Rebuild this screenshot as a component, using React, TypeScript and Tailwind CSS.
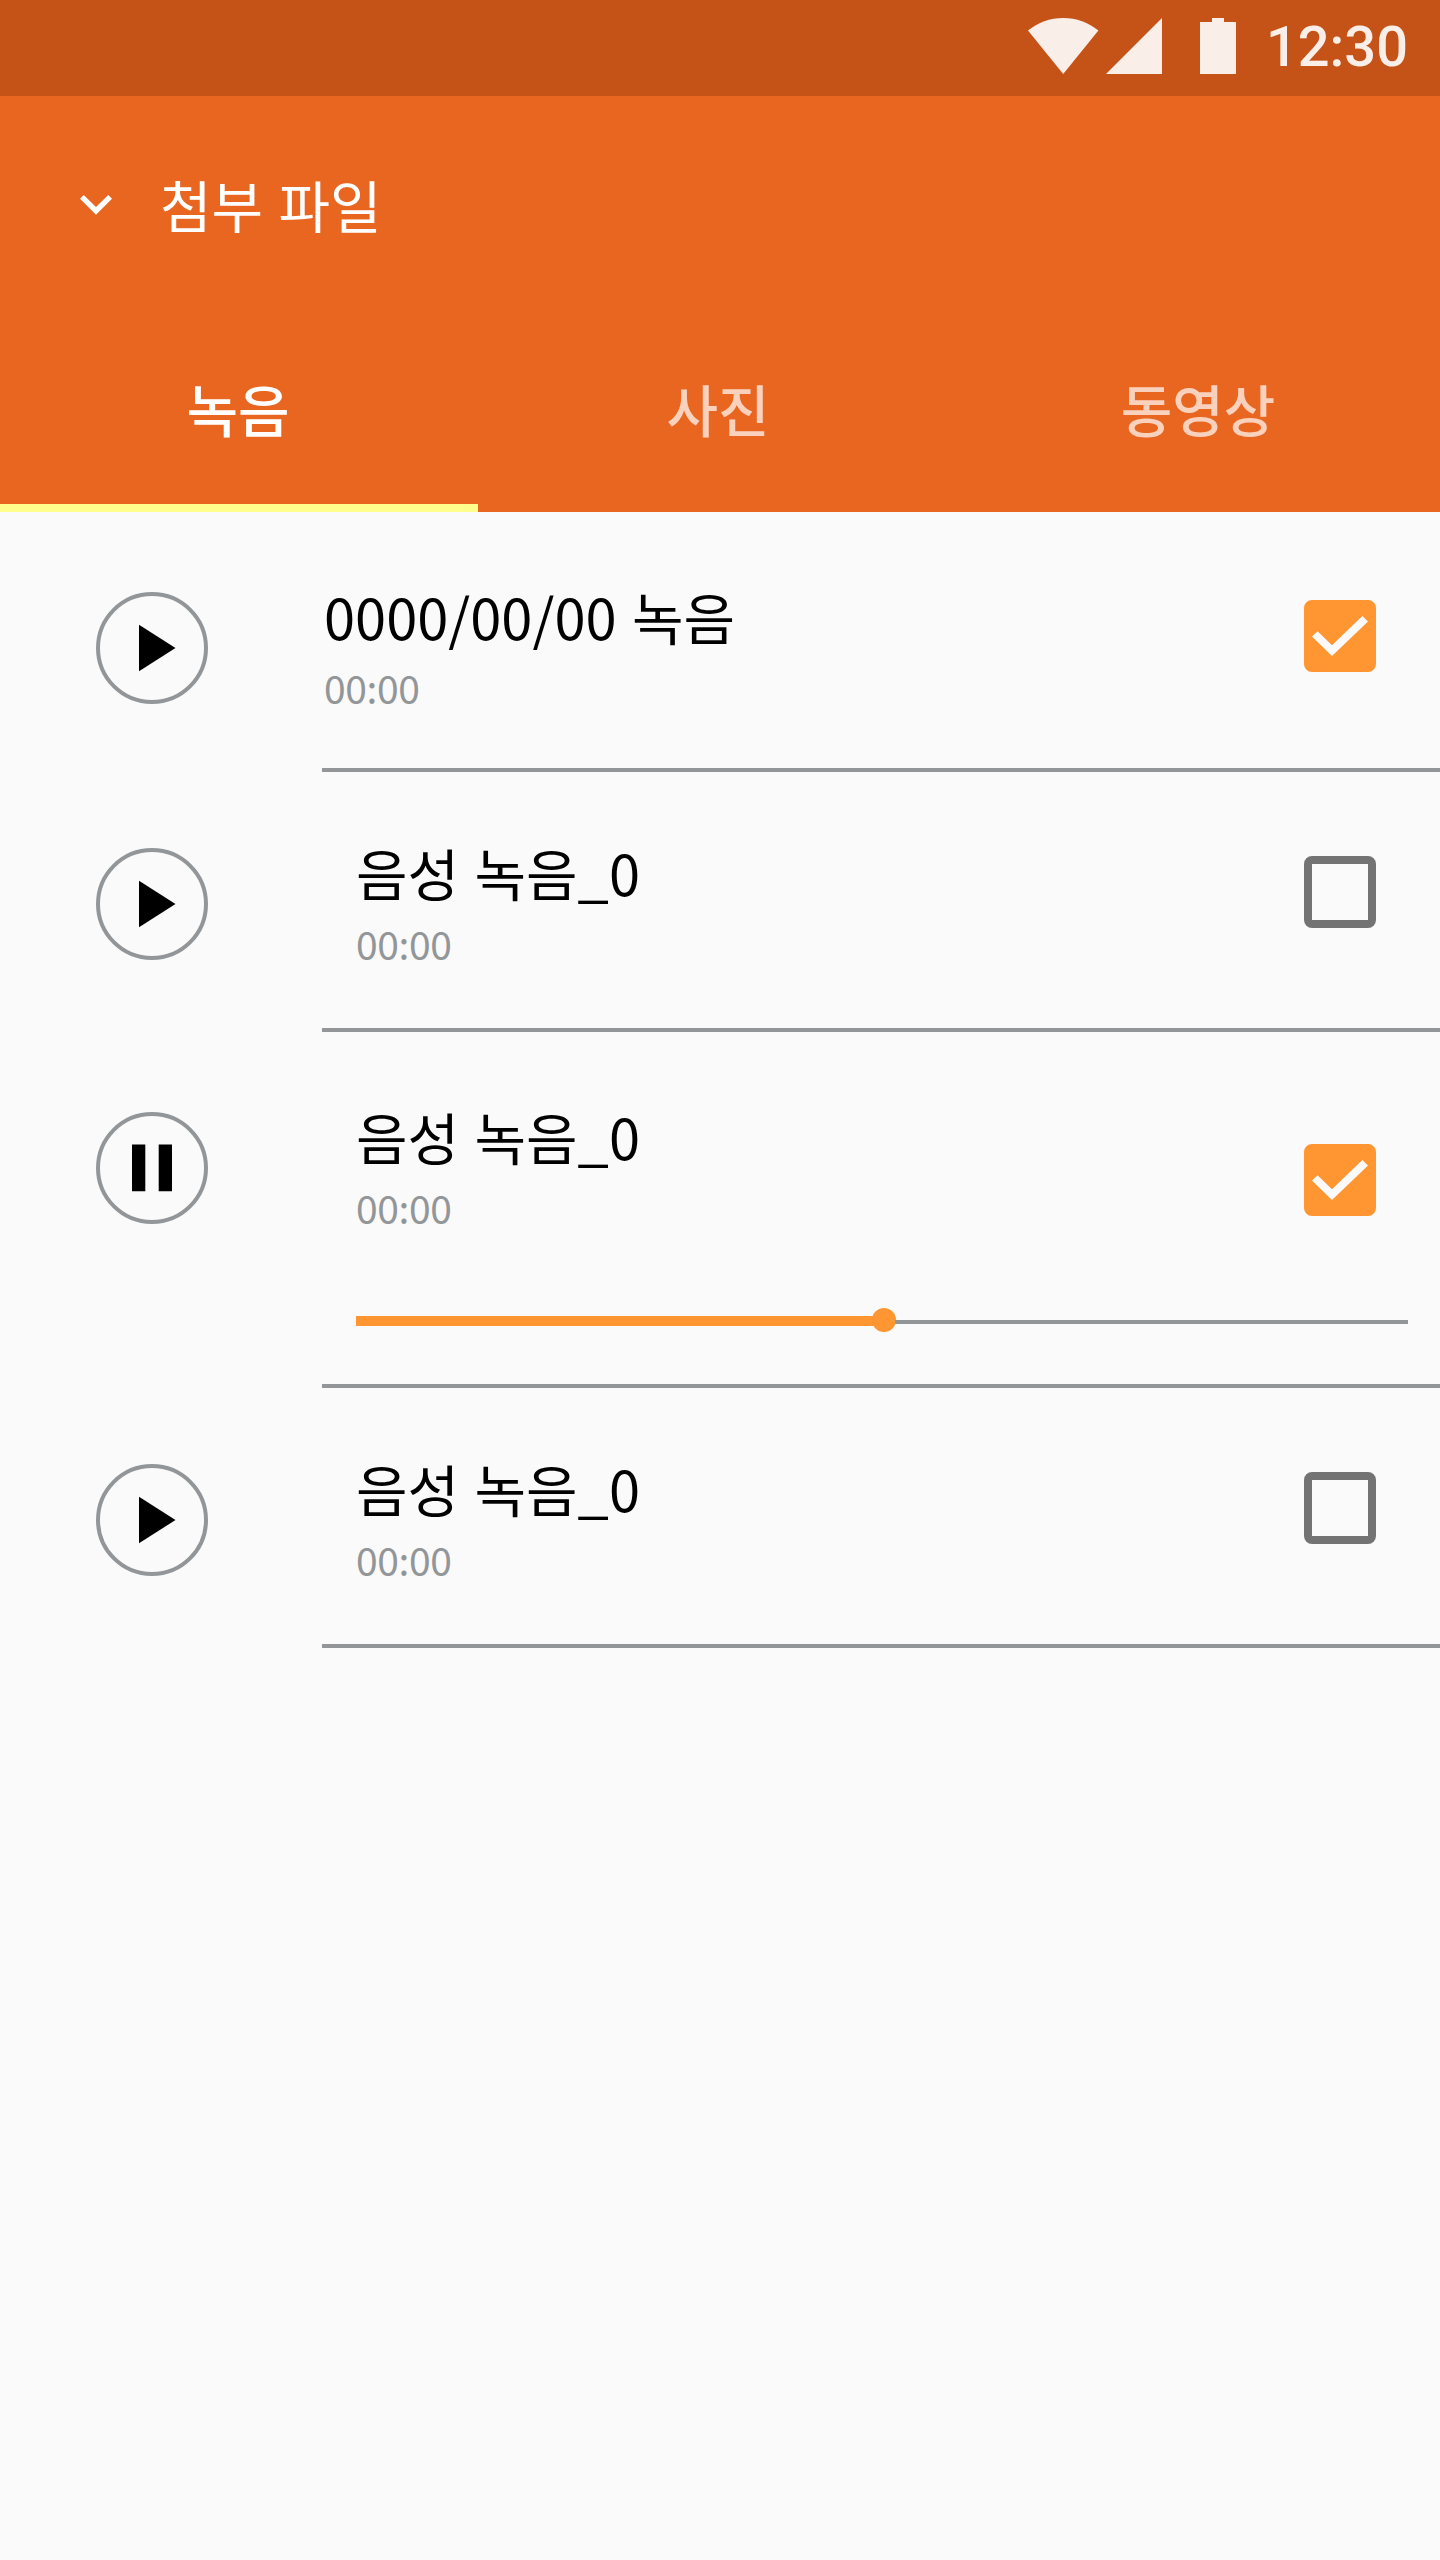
type Item = {
  title: string;
  time: string;
  checked: boolean;
  playing?: boolean;
  row: string;
  circle: string;
  text: string;
  check: string;
};

const items: Item[] = [
  { title: "0000/00/00 녹음", time: "00:00", checked: true, row: "h-[260px]", circle: "mt-[80px]", text: "ml-[116px] mt-[64px]", check: "mt-[88px]" },
  { title: "음성 녹음_0", time: "00:00", checked: false, row: "h-[260px]", circle: "mt-[76px]", text: "ml-[148px] mt-[60px]", check: "mt-[84px]" },
  { title: "음성 녹음_0", time: "00:00", checked: true, playing: true, row: "h-[356px]", circle: "mt-[80px]", text: "ml-[148px] mt-[64px]", check: "mt-[112px]" },
  { title: "음성 녹음_0", time: "00:00", checked: false, row: "h-[260px]", circle: "mt-[76px]", text: "ml-[148px] mt-[60px]", check: "mt-[84px]" },
];

function StatusBar() {
  return (
    <div className="flex h-24 justify-end bg-[#c55217] pr-8 text-white/90">
      <svg className="mt-[18px] h-14 w-[208px] shrink-0" viewBox="0 0 208 56" fill="currentColor">
        <path d="M35.2 56 0 12.4C10 4.6 22 0 35.2 0s25.2 4.6 35.2 12.4z" />
        <path d="M78 56h56V0z" />
        <path d="M172 4h12V0h12v4h12v52h-36z" />
      </svg>
      <span className="ml-[30px] mt-[15px] font-[Roboto] text-[56px] font-medium leading-[64px]">12:30</span>
    </div>
  );
}

function Header() {
  return (
    <header className="flex h-[416px] flex-col justify-between bg-[#e96621] text-white">
      <div className="flex pl-16 pt-[68px]">
        <svg className="mt-2 size-16" viewBox="0 0 24 24" fill="currentColor">
          <path d="M7.41 8.59 12 13.17l4.59-4.58L18 10l-6 6-6-6z" />
        </svg>
        <h1 className="ml-8 text-[56px] leading-[80px] [word-spacing:3px]">첨부 파일</h1>
      </div>
      <nav className="flex h-[208px] pr-[2px] text-[56px] font-medium">
        <div className="flex w-[478px] flex-col items-center justify-between">
          <span className="mr-[2px] mt-[64px] leading-[80px]">녹음</span>
          <div className="h-2 w-full bg-[#ffff8d]" />
        </div>
        <div className="flex-1 pt-[64px] text-center leading-[80px] text-white/70">사진</div>
        <div className="flex-1 pt-[64px] text-center leading-[80px] text-white/70">동영상</div>
      </nav>
    </header>
  );
}

function PlayButton({ playing }: { playing?: boolean }) {
  return (
    <svg className="size-[112px]" viewBox="0 0 112 112">
      <circle cx="56" cy="56" r="54" fill="none" stroke="#939699" strokeWidth="4" />
      {playing ? (
        <path d="M36 32.5h13.3v46.7H36zM62.7 32.5H76v46.7H62.7z" />
      ) : (
        <path d="M43 32.7v46.6L79.5 56z" />
      )}
    </svg>
  );
}

function Checkbox({ checked }: { checked: boolean }) {
  return checked ? (
    <svg className="size-[72px]" viewBox="0 0 18 18">
      <path
        fill="#ff9632"
        fillRule="evenodd"
        d="M2 0h14a2 2 0 0 1 2 2v14a2 2 0 0 1-2 2H2a2 2 0 0 1-2-2V2a2 2 0 0 1 2-2zM7 14 2 9.15l1.4-1.35L7 11.3 14.6 4 16 5.35z"
      />
    </svg>
  ) : (
    <svg className="size-[72px]" viewBox="0 0 18 18">
      <path
        fill="#737373"
        fillRule="evenodd"
        d="M2 0h14a2 2 0 0 1 2 2v14a2 2 0 0 1-2 2H2a2 2 0 0 1-2-2V2a2 2 0 0 1 2-2zM2 2v14h14V2z"
      />
    </svg>
  );
}

function Progress() {
  return (
    <div className="ml-[356px] mr-8 mt-[84px] flex h-6 items-start">
      <div className="mt-2 h-[10px] w-[518px] bg-[#ff9632]" />
      <div className="-ml-[2px] size-6 rounded-full bg-[#ff9632]" />
      <div className="-ml-px mt-3 h-1 flex-1 bg-[#939699]" />
    </div>
  );
}

export default function App() {
  return (
    <div className="h-[2560px] w-[1440px] overflow-hidden bg-[#fafafa] font-['Noto_Sans_CJK_KR',sans-serif]">
      <StatusBar />
      <Header />
      <main>
        {items.map((item, i) => (
          <section key={i} className={`flex flex-col ${item.row}`}>
            <div className="flex h-[192px] shrink-0 items-start pl-24 pr-16">
              <div className={item.circle}>
                <PlayButton playing={item.playing} />
              </div>
              <div className={`flex-1 ${item.text}`}>
                <div className="text-[56px] leading-[80px] text-black [word-spacing:3px]">{item.title}</div>
                <div className="mt-[2px] text-[39px] leading-[58px] tracking-[-0.4px] text-[#939699]">{item.time}</div>
              </div>
              <div className={item.check}>
                <Checkbox checked={item.checked} />
              </div>
            </div>
            {item.playing && <Progress />}
            <div className="ml-[322px] mt-auto h-1 shrink-0 bg-[#939699]" />
          </section>
        ))}
      </main>
    </div>
  );
}
